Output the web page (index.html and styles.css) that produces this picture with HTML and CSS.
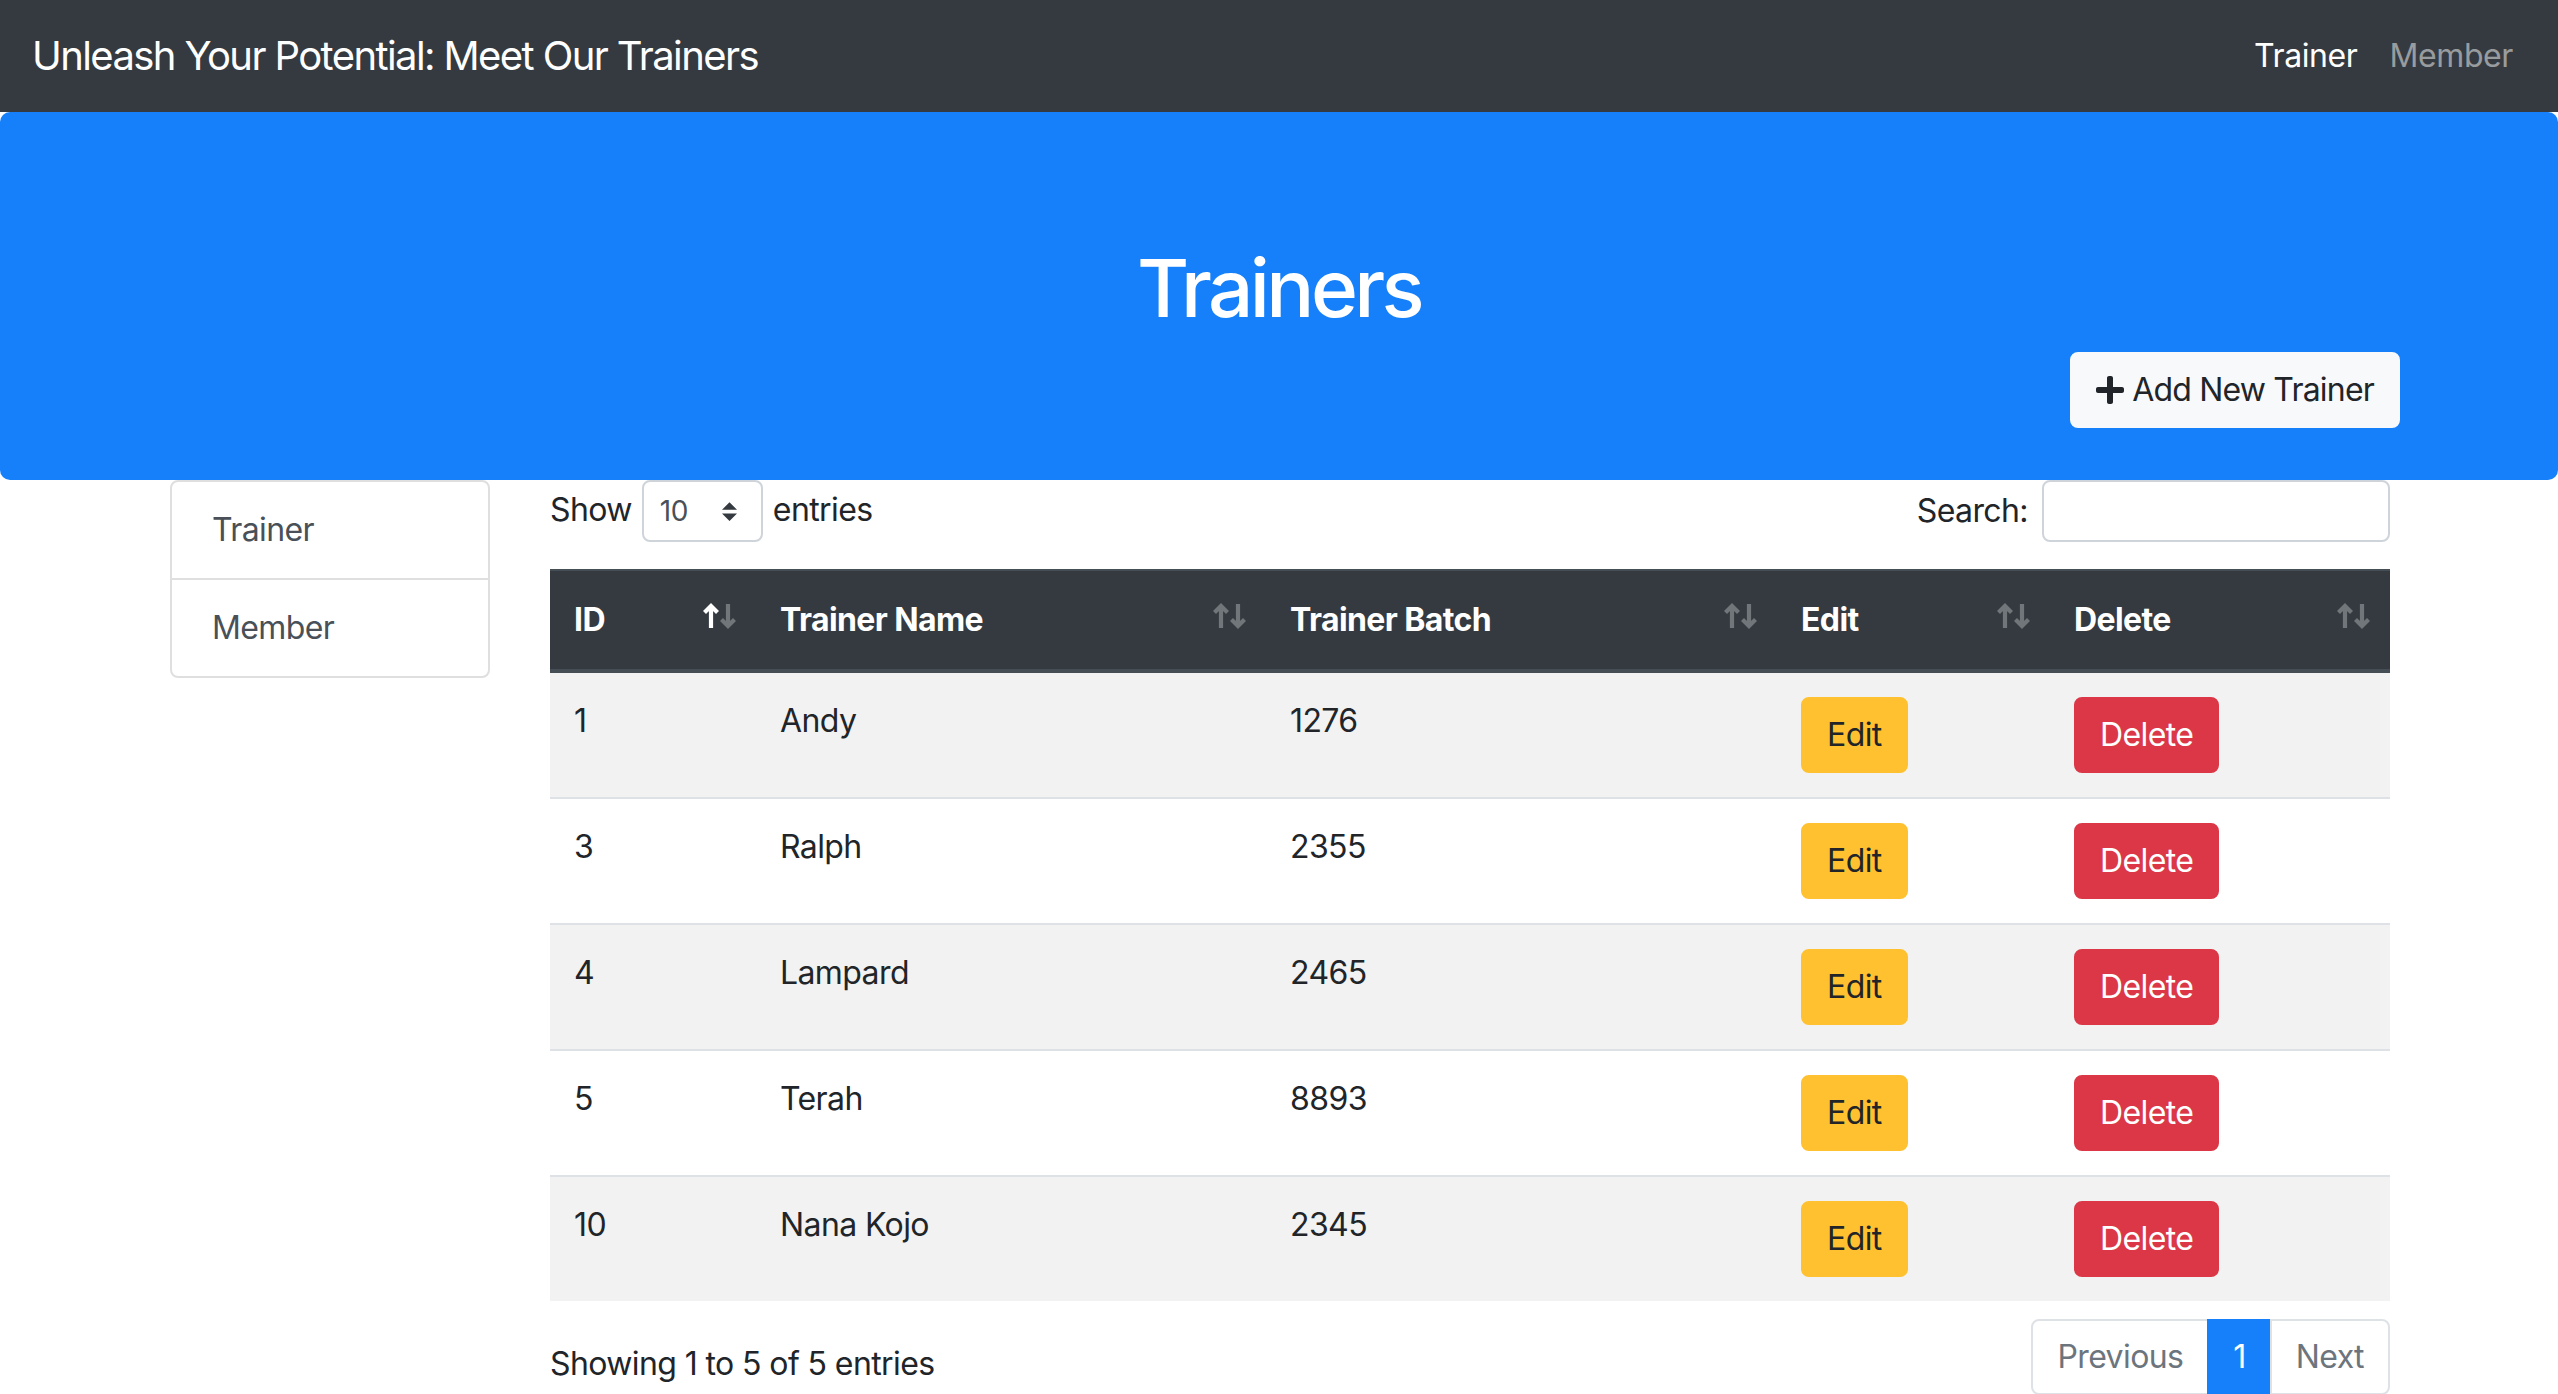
FILE: index.html
```html
<!DOCTYPE html>
<html lang="en">
<head>
<meta charset="utf-8">
<title>Trainers</title>
<link rel="stylesheet" href="styles.css">
</head>
<body>
<nav class="navbar">
  <a class="brand" href="#">Unleash Your Potential: Meet Our Trainers</a>
  <ul class="nav-links">
    <li><a class="nav-link active" href="#">Trainer</a></li>
    <li><a class="nav-link" href="#">Member</a></li>
  </ul>
</nav>

<header class="jumbotron">
  <h1 class="jumbo-title">Trainers</h1>
  <div class="jumbo-actions">
    <button class="btn btn-light" type="button">
      <svg class="icon-plus" viewBox="0 0 448 512" aria-hidden="true"><path d="M416 208H272V64c0-17.670-14.330-32-32-32h-32c-17.670 0-32 14.330-32 32v144H32c-17.670 0-32 14.330-32 32v32c0 17.670 14.330 32 32 32h144v144c0 17.670 14.330 32 32 32h32c17.670 0 32-14.330 32-32V304h144c17.670 0 32-14.330 32-32v-32c0-17.670-14.330-32-32-32z"/></svg>
      <span>Add New Trainer</span>
    </button>
  </div>
</header>

<div class="container">
  <aside class="sidebar">
    <div class="list-group">
      <a class="list-item" href="#">Trainer</a>
      <a class="list-item" href="#">Member</a>
    </div>
  </aside>

  <main class="content">
    <div class="dt-top">
      <label class="dt-length">Show
        <span class="fake-select">10
          <svg class="select-arrows" viewBox="0 0 4 5" aria-hidden="true"><path d="M2 0L0 2h4zm0 5L0 3h4z"/></svg>
        </span>
        entries</label>
      <label class="dt-search">Search:<input class="search-input" type="search"></label>
    </div>

    <table class="data-table">
      <thead>
        <tr>
          <th class="col-id"><div class="th-inner"><span>ID</span><span class="sort asc"><svg viewBox="0 0 16 26"><path d="M8 25V3M1.5 9.5L8 3l6.5 6.5"/></svg><svg class="dn" viewBox="0 0 16 26"><path d="M8 1v22M1.5 16.5L8 23l6.5-6.5"/></svg></span></div></th>
          <th class="col-name"><div class="th-inner"><span>Trainer Name</span><span class="sort"><svg viewBox="0 0 16 26"><path d="M8 25V3M1.5 9.5L8 3l6.5 6.5"/></svg><svg class="dn" viewBox="0 0 16 26"><path d="M8 1v22M1.5 16.5L8 23l6.5-6.5"/></svg></span></div></th>
          <th class="col-batch"><div class="th-inner"><span>Trainer Batch</span><span class="sort"><svg viewBox="0 0 16 26"><path d="M8 25V3M1.5 9.5L8 3l6.5 6.5"/></svg><svg class="dn" viewBox="0 0 16 26"><path d="M8 1v22M1.5 16.5L8 23l6.5-6.5"/></svg></span></div></th>
          <th class="col-edit"><div class="th-inner"><span>Edit</span><span class="sort"><svg viewBox="0 0 16 26"><path d="M8 25V3M1.5 9.5L8 3l6.5 6.5"/></svg><svg class="dn" viewBox="0 0 16 26"><path d="M8 1v22M1.5 16.5L8 23l6.5-6.5"/></svg></span></div></th>
          <th class="col-delete"><div class="th-inner"><span>Delete</span><span class="sort"><svg viewBox="0 0 16 26"><path d="M8 25V3M1.5 9.5L8 3l6.5 6.5"/></svg><svg class="dn" viewBox="0 0 16 26"><path d="M8 1v22M1.5 16.5L8 23l6.5-6.5"/></svg></span></div></th>
        </tr>
      </thead>
      <tbody>
        <tr><td>1</td><td>Andy</td><td>1276</td><td><button class="btn btn-warning">Edit</button></td><td><button class="btn btn-danger">Delete</button></td></tr>
        <tr><td>3</td><td>Ralph</td><td>2355</td><td><button class="btn btn-warning">Edit</button></td><td><button class="btn btn-danger">Delete</button></td></tr>
        <tr><td>4</td><td>Lampard</td><td>2465</td><td><button class="btn btn-warning">Edit</button></td><td><button class="btn btn-danger">Delete</button></td></tr>
        <tr><td>5</td><td>Terah</td><td>8893</td><td><button class="btn btn-warning">Edit</button></td><td><button class="btn btn-danger">Delete</button></td></tr>
        <tr><td>10</td><td>Nana Kojo</td><td>2345</td><td><button class="btn btn-warning">Edit</button></td><td><button class="btn btn-danger">Delete</button></td></tr>
      </tbody>
    </table>

    <div class="dt-bottom">
      <div class="dt-info">Showing 1 to 5 of 5 entries</div>
      <ul class="pagination">
        <li class="page-item disabled"><a class="page-link" href="#">Previous</a></li>
        <li class="page-item active"><a class="page-link" href="#">1</a></li>
        <li class="page-item disabled"><a class="page-link" href="#">Next</a></li>
      </ul>
    </div>
  </main>
</div>
</body>
</html>
```
FILE: styles.css
```css
* { box-sizing: border-box; }

html, body { margin: 0; padding: 0; }

body {
  font-family: Inter, "Liberation Sans", Arial, sans-serif;
  font-size: 32px;
  line-height: 1.5;
  letter-spacing: -0.6px;
  color: #212529;
  background: #fff;
}

a { text-decoration: none; }

/* Navbar */
.navbar {
  display: flex;
  align-items: center;
  justify-content: space-between;
  background: #343a40;
  padding: 16px 29px 16px 32px;
  height: 112px;
}
.brand {
  color: #fff;
  font-size: 40px;
  line-height: 60px;
  padding: 10px 0;
  letter-spacing: -1.6px;
}
.nav-links {
  display: flex;
  list-style: none;
  margin: 0;
  padding: 0;
}
.nav-link {
  display: block;
  padding: 16px;
  line-height: 48px;
  letter-spacing: -0.4px;
  color: rgba(255, 255, 255, 0.5);
}
.nav-link.active { color: #fff; }

/* Jumbotron */
.jumbotron {
  background: #1680fb;
  border-radius: 10px;
  padding: 128px 158px 52px 64px;
}
.jumbo-title {
  margin: 0 0 16px;
  font-size: 80px;
  font-weight: 500;
  line-height: 1.2;
  letter-spacing: -3.6px;
  text-align: center;
  color: #fff;
  padding-left: 94px;
}
.jumbo-actions {
  display: flex;
  justify-content: flex-end;
}

/* Buttons */
.btn {
  display: inline-flex;
  align-items: center;
  gap: 8px;
  font-family: inherit;
  font-size: 32px;
  line-height: 48px;
  letter-spacing: inherit;
  padding: 12px 24px;
  border: 2px solid transparent;
  border-radius: 8px;
  cursor: pointer;
}
.btn-light { background: #f8f9fa; border-color: #f8f9fa; color: #212529; letter-spacing: -0.8px; }
.btn-warning { background: #ffc12f; border-color: #ffc12f; color: #212529; }
.btn-danger { background: #db3747; border-color: #db3747; color: #fff; }
.icon-plus { width: 28px; height: 32px; fill: #212529; }

/* Layout */
.container {
  width: 2220px;
  margin: 0 0 0 170px;
  display: flex;
  gap: 60px;
  align-items: flex-start;
}
.sidebar { width: 320px; flex: none; }
.content { flex: 1; min-width: 0; }

/* List group */
.list-group {
  display: flex;
  flex-direction: column;
  border: 2px solid #dfdfdf;
  border-radius: 8px;
}
.list-item {
  display: block;
  padding: 24px 40px;
  line-height: 48px;
  color: #495057;
}
.list-item + .list-item { border-top: 2px solid #dfdfdf; }

/* DataTables top */
.dt-top {
  display: flex;
  justify-content: space-between;
  align-items: center;
  margin-bottom: 27px;
}
.dt-length, .dt-search {
  display: flex;
}
.dt-length { gap: 10px; align-items: baseline; }
.dt-search { gap: 14px; align-items: center; }
.fake-select {
  display: inline-flex;
  align-items: center;
  justify-content: space-between;
  width: 121px;
  height: 62px;
  padding: 0 24px 0 16px;
  border: 2px solid #ced4da;
  border-radius: 8px;
  font-size: 28px;
  color: #495057;
}
.select-arrows { width: 15px; height: 19px; fill: #343a40; }
.search-input {
  width: 348px;
  height: 62px;
  border: 2px solid #ced4da;
  border-radius: 8px;
  font-family: inherit;
  font-size: 28px;
  padding: 0 16px;
}

/* Table */
.data-table {
  width: 100%;
  table-layout: fixed;
  border-collapse: collapse;
}
.col-id { width: 206px; }
.col-name { width: 510px; }
.col-batch { width: 511px; }
.col-edit { width: 273px; }
.col-delete { width: 340px; }

.data-table th {
  background: #343a40;
  color: #fff;
  font-weight: 700;
  text-align: left;
  padding: 25px 20px 25px 24px;
  line-height: 48px;
  border-top: 2px solid #454d55;
  border-bottom: 4px solid #454d55;
}
.th-inner {
  display: flex;
  align-items: center;
  justify-content: space-between;
}
.sort {
  display: flex;
  margin-bottom: 8px;
}
.sort svg {
  width: 16px;
  height: 26px;
  fill: none;
  stroke: #fff;
  stroke-width: 4.2;
  stroke-linecap: butt;
  stroke-linejoin: miter;
  opacity: 0.3;
}
.sort svg.dn { margin-left: 1px; }
.sort.asc svg:first-child { opacity: 1; }

.data-table td {
  padding: 24px;
  line-height: 48px;
  vertical-align: top;
  border-top: 2px solid #dee2e6;
}
.data-table thead + tbody tr:first-child td { border-top: none; }
.data-table tbody tr:nth-child(odd) { background: #f2f2f2; }

/* Bottom */
.dt-bottom {
  display: flex;
  justify-content: space-between;
  align-items: flex-start;
  margin-top: 14px;
}
.dt-info {
  padding-top: 25px;
  line-height: 48px;
}
.pagination {
  display: flex;
  list-style: none;
  margin: 4px 0 0;
  padding: 0;
}
.page-link {
  display: block;
  padding: 16px 24px;
  line-height: 40px;
  border: 2px solid #dee2e6;
  color: #6c757d;
  background: #fff;
}
.page-item + .page-item .page-link { margin-left: -2px; }
.page-item:first-child .page-link { border-radius: 8px 0 0 8px; }
.page-item:last-child .page-link { border-radius: 0 8px 8px 0; }
.page-item.active .page-link {
  background: #1680fb;
  border-color: #1680fb;
  color: #fff;
}
```
